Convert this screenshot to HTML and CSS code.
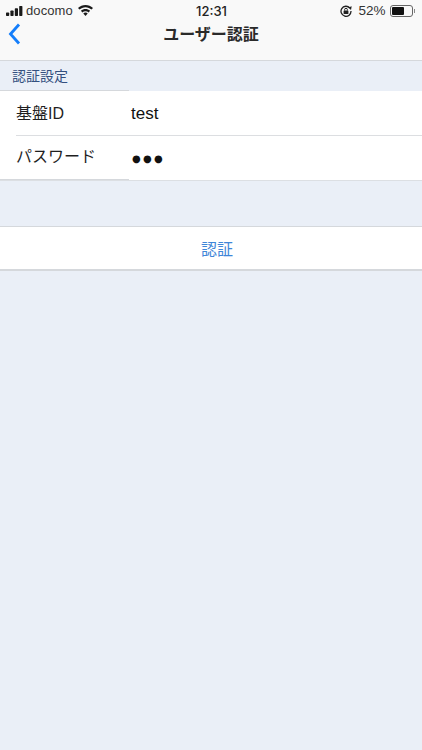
FILE: index.html
```html
<!DOCTYPE html>
<html lang="ja">
<head>
<meta charset="utf-8">
<title>ユーザー認証</title>
<link rel="stylesheet" href="styles.css">
</head>
<body>
<header class="top">
  <div class="status">
    <div class="status-left">
      <svg class="signal" width="17" height="10" viewBox="0 0 17 10"><rect x="0" y="6.500" width="3.200" height="3.500" rx=".7"/><rect x="4.400" y="4.500" width="3.200" height="5.500" rx=".7"/><rect x="8.800" y="2.300" width="3.200" height="7.700" rx=".7"/><rect x="13.200" y="0" width="3.200" height="10" rx=".7"/></svg>
      <span class="carrier">docomo</span>
      <svg class="wifi" width="15" height="11" viewBox="0 0 15 11"><path d="M7.500 0C4.600 0 2.100 1.100 0 3l1.500 1.600C3.100 3.100 5.200 2.200 7.500 2.200s4.400.9 6 2.400L15 3C12.900 1.100 10.400 0 7.500 0z"/><path d="M7.500 4C5.800 4 4.200 4.600 2.900 5.800l1.500 1.600c.8-.8 1.900-1.200 3.100-1.200s2.300.4 3.100 1.200l1.500-1.600C10.800 4.600 9.200 4 7.500 4z"/><path d="M7.500 7.600c-.9 0-1.600.3-2.200.9l2.200 2.500 2.200-2.500c-.6-.6-1.300-.9-2.200-.9z"/></svg>
    </div>
    <div class="clock">12:31</div>
    <div class="status-right">
      <svg class="lock" width="12" height="12" viewBox="0 0 12 12"><path d="M9.800 3A5 5 0 1 0 11 6" fill="none" stroke="#222" stroke-width="1.300"/><path d="M8.300 2.600 11.700 1.200 11 5z" fill="#222"/><rect x="3.600" y="5.400" width="4.800" height="3.500" rx=".5" fill="#222"/><path d="M4.600 5.500V4.700a1.400 1.400 0 0 1 2.800 0v.8" fill="none" stroke="#222" stroke-width="1"/></svg>
      <span class="pct">52%</span>
      <span class="battery"><span class="charge"></span></span>
      <span class="nub"></span>
    </div>
  </div>
  <nav class="nav">
    <svg class="back" width="13" height="22" viewBox="0 0 13 22"><path d="M11 1.500 2.500 11l8.500 9.500" fill="none" stroke="#147efb" stroke-width="2.800"/></svg>
    <h1 class="title">ユーザー認証</h1>
  </nav>
</header>
<main>
  <div class="section-head">認証設定</div>
  <div class="form">
    <div class="row">
      <span class="label">基盤ID</span>
      <span class="value">test</span>
    </div>
    <div class="row last">
      <span class="label">パスワード</span>
      <span class="value dots">●●●</span>
    </div>
  </div>
  <button class="action" type="button">認証</button>
</main>
</body>
</html>
```
FILE: styles.css
```css
* { box-sizing: border-box; }
html, body { margin: 0; padding: 0; }
body {
  width: 422px;
  height: 750px;
  overflow: hidden;
  background: #eaeff7;
  font-family: "Liberation Sans", "Noto Sans CJK JP", sans-serif;
  color: #1a1a1a;
}
.top {
  height: 61px;
  background: #f9f9f9;
  border-bottom: 1px solid #d5d8dc;
}
.status {
  height: 21px;
  padding: 0 7px 0 6px;
  display: grid;
  grid-template-columns: 1fr auto 1fr;
  align-items: center;
  font-size: 13px;
}
.status-left { display: flex; align-items: center; gap: 3px; }
.status-left svg { fill: #1a1a1a; }
.carrier { margin-right: 2px; color: #333; letter-spacing: .1px; }
.clock { margin-left: 2px; font-weight: 500; font-size: 13px; color: #222; font-family: "Inter", "Liberation Sans", sans-serif; }
.status-right { display: flex; align-items: center; justify-content: flex-end; gap: 0; color: #333; }
.lock { margin-right: 6px; }
.pct { margin-right: 4px; font-size: 13.500px; }
.battery {
  width: 23px;
  height: 12px;
  border: 1px solid #666;
  border-radius: 3px;
  padding: 1px;
  display: block;
}
.charge { display: block; width: 12px; height: 8px; background: #111; border-radius: 1px; }
.nub { width: 1.500px; height: 4px; background: #888; margin-left: 1px; }
.nav {
  position: relative;
  height: 23px;
  display: flex;
  align-items: center;
  justify-content: center;
}
.back { position: absolute; left: 8px; top: 2px; }
.title { margin: 0; font-size: 16px; font-weight: 700; color: #2a2a2a; }
.section-head {
  height: 30px;
  padding: 0 12px 2px;
  display: flex;
  align-items: center;
  font-size: 14px;
  color: #34507f;
}
.form {
  position: relative;
  background: #fff;
  border-bottom: 1px solid #dcdfe3;
}
.form::before,
.form::after {
  content: "";
  position: absolute;
  left: 0;
  width: 129px;
  height: 1px;
  background: #d5d8dc;
}
.form::before { top: -1px; }
.form::after { bottom: 0; }
.row {
  height: 44.500px;
  margin-left: 16px;
  display: flex;
  align-items: center;
  border-bottom: 1px solid #dcdee1;
}
.row.last { border-bottom: 0; }
.label { width: 115px; font-size: 16px; color: #1f1f1f; }
.row .label { margin-top: -2px; }
.row.last .label { margin-top: -5px; }
.value { font-size: 17px; color: #111; padding-top: 3px; }
.dots { font-size: 10px; letter-spacing: 2.300px; margin-left: 1px; padding-top: 1px; font-family: "DejaVu Sans", sans-serif; }
.action {
  display: block;
  width: 100%;
  height: 45px;
  margin-top: 45px;
  padding: 0 0 0 12px;
  background: #fff;
  border: 0;
  border-top: 1px solid #d5d8dc;
  border-bottom: 2px solid #d5d8dc;
  font: inherit;
  font-size: 16px;
  color: #3f86d8;
}
```
